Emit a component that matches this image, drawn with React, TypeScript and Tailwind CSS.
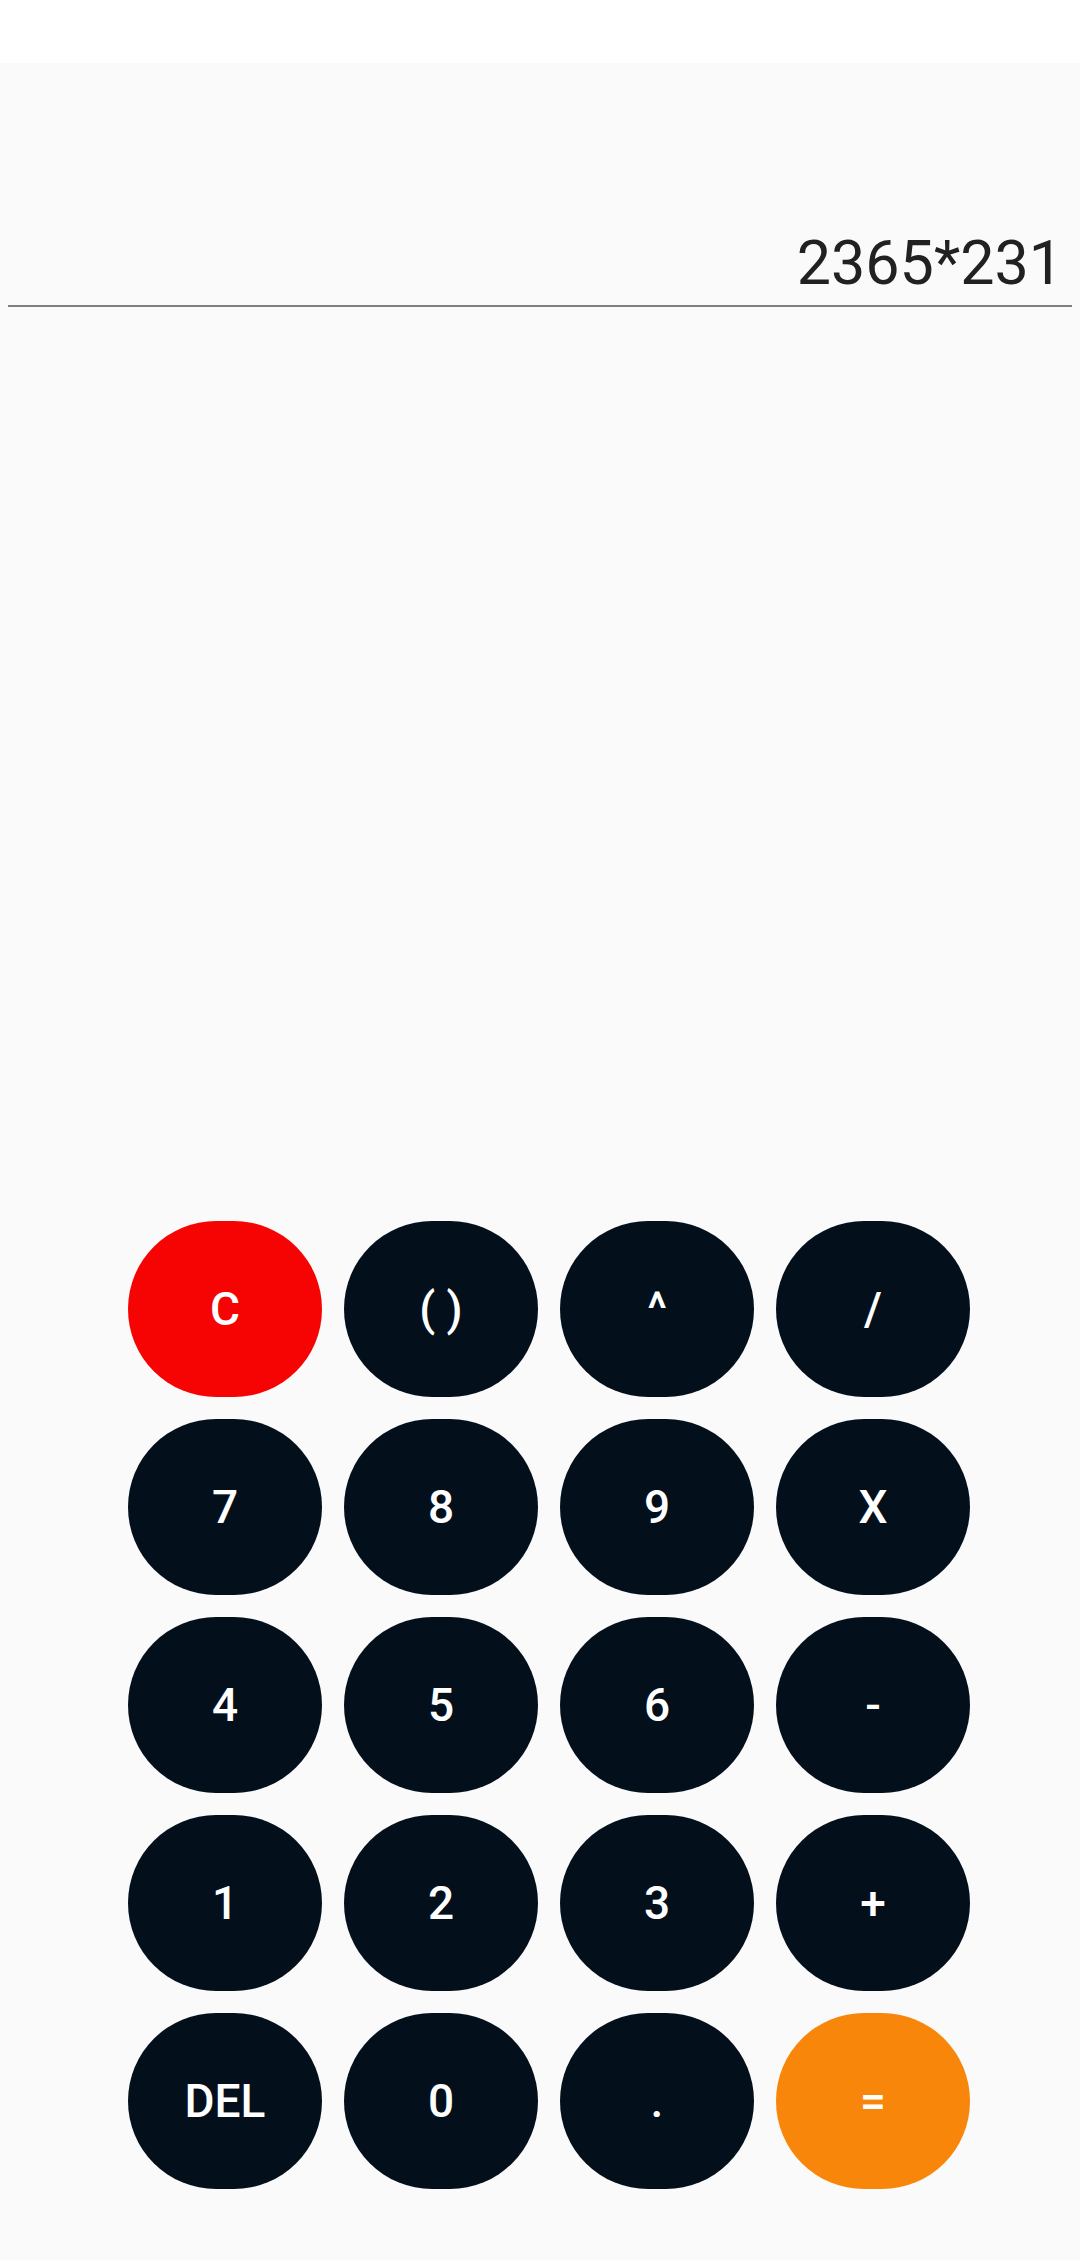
const keys: { label: string; tone?: "red" | "orange" }[] = [
  { label: "C", tone: "red" },
  { label: "( )" },
  { label: "^" },
  { label: "/" },
  { label: "7" },
  { label: "8" },
  { label: "9" },
  { label: "X" },
  { label: "4" },
  { label: "5" },
  { label: "6" },
  { label: "-" },
  { label: "1" },
  { label: "2" },
  { label: "3" },
  { label: "+" },
  { label: "DEL" },
  { label: "0" },
  { label: "." },
  { label: "=", tone: "orange" },
];

const Key = ({ label, tone }: { label: string; tone?: "red" | "orange" }) => {
  const bg =
    tone === "red" ? "bg-[#f60404]" : tone === "orange" ? "bg-[#f7860a]" : "bg-[#03101c]";
  return (
    <button
      className={`${bg} w-[194px] h-[176px] rounded-full flex items-center justify-center text-white text-[46px] font-medium leading-none`}
    >
      {label}
    </button>
  );
};

export default function App() {
  return (
    <div className="w-[1080px] min-h-[2260px] flex flex-col font-['Roboto',sans-serif] bg-white">
      {/* status bar */}
      <div className="h-[63px] bg-white" />

      <div className="flex-1 bg-[#fafafa] flex flex-col">
        {/* display */}
        <div className="mt-[164px] mx-[8px] pr-[9px] pb-[6px] border-b-2 border-[#7f7f7f] text-right">
          <span className="text-[61px] leading-[72px] text-[#212121] font-normal">2365*231</span>
        </div>

        {/* keypad */}
        <div className="mt-[914px] ml-[128px] grid grid-cols-[repeat(4,194px)] gap-x-[22px] gap-y-[22px]">
          {keys.map((k) => (
            <Key key={k.label} label={k.label} tone={k.tone} />
          ))}
        </div>
      </div>
    </div>
  );
}
